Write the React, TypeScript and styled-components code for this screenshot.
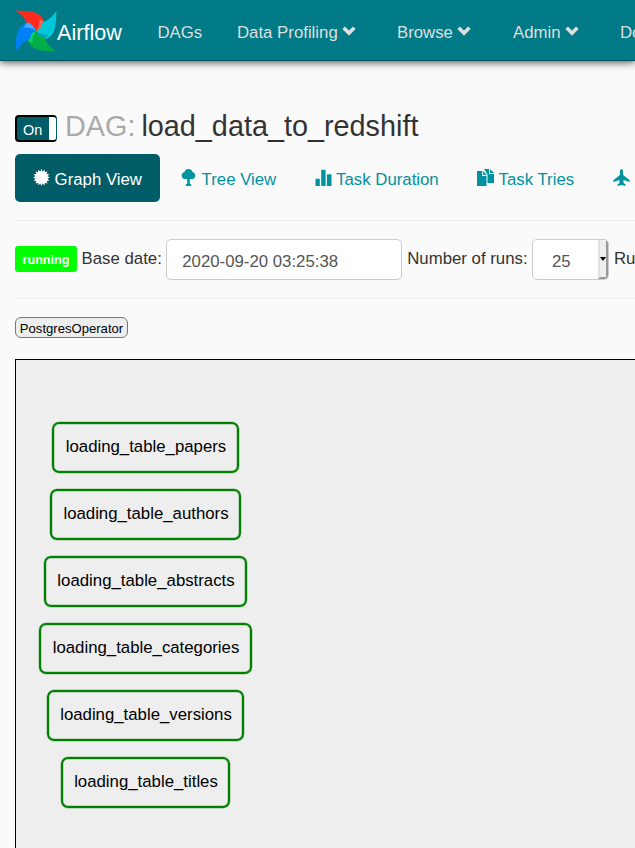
import React from "react";
import styled, { createGlobalStyle } from "styled-components";

const GlobalStyle = createGlobalStyle`
  * { box-sizing: border-box; }
  html, body { margin: 0; height: 848px; overflow: hidden; }
  body {
    background: #fafafa;
    color: #333;
    font: 16.8px/24px "Liberation Sans", Arial, sans-serif;
  }
`;

const Page = styled.div`
  width: 635px;
  height: 848px;
  overflow: hidden;
  white-space: nowrap;
`;

const Navbar = styled.nav`
  display: flex;
  align-items: center;
  height: 61px;
  padding: 5px 0 0 15px;
  background: #007a87;
  border-bottom: 1px solid #004f58;
  box-shadow: 0 1px 8px rgba(0, 0, 0, 0.75);
`;

const Brand = styled.a`
  display: flex;
  flex: none;
  align-items: center;
  width: 142.5px;
  color: #fff;
  font-size: 21.6px;
`;

const Logo = styled.svg`
  flex: none;
  width: 42px;
  height: 42px;
  margin-top: -3px;
`;

const NavItem = styled.a<{ $w: number }>`
  display: flex;
  flex: none;
  align-items: center;
  width: ${(p) => p.$w}px;
  gap: 4.5px;
  color: #dfdfdf;
`;

const Main = styled.main`
  padding: 48px 0 0 15px;
`;

const Heading = styled.h3`
  display: flex;
  align-items: center;
  height: 35px;
  margin: 0;
  font-size: 28.8px;
  font-weight: 400;
  line-height: 32px;
`;

const Toggle = styled.span`
  display: flex;
  flex: none;
  align-items: stretch;
  justify-content: space-between;
  width: 42px;
  height: 27px;
  margin: 4px 8px 0 0;
  padding-left: 6px;
  border: 2px solid #000;
  border-right: 1px solid #005c66;
  border-radius: 4px;
  overflow: hidden;
  background: #005c66;
  color: #fff;
  font-size: 14.4px;
  line-height: 26px;
`;

const Knob = styled.i`
  width: 7px;
  margin: -1px 0;
  border-radius: 3px;
  background: #fff;
`;

const Title = styled.span`
  margin-top: -2px;
`;

const Muted = styled.span`
  margin-right: 6px;
  color: #aaa;
`;

const Tabs = styled.div`
  display: flex;
  height: 77px;
  padding: 10px 0 18px;
  border-bottom: 1px solid #eee;
`;

const Tab = styled.a<{ $w: number; $active?: boolean }>`
  display: flex;
  flex: none;
  align-items: center;
  width: ${(p) => p.$w}px;
  height: 48px;
  margin-right: 2px;
  padding: 3px 0 0 18px;
  gap: 4.6px;
  border-radius: 5px;
  color: ${(p) => (p.$active ? "#fff" : "#0092a0")};
  background: ${(p) => (p.$active ? "#005c66" : "transparent")};
`;

const Icon = styled.svg`
  flex: none;
  width: 17px;
  height: 17px;
  margin-top: -4px;
  fill: currentColor;
`;

const Chevron = styled.svg`
  width: 14px;
  height: 10px;
  margin-top: -3px;
  fill: #dfdfdf;
`;

const Filters = styled.form`
  display: flex;
  align-items: center;
  height: 78px;
  border-bottom: 1px solid #eee;
`;

const Label = styled.label`
  flex: none;
  margin-top: -2px;
`;

const Status = styled.span`
  flex: none;
  width: 62px;
  height: 26px;
  margin: -2px 4.600px 0 0;
  border-radius: 3px;
  background: #0f0;
  color: #fff;
  font-size: 12.6px;
  font-weight: 700;
  line-height: 28px;
  text-align: center;
`;

const Field = styled.span<{ $w: number; $pad: number }>`
  display: flex;
  flex: none;
  justify-content: space-between;
  width: ${(p) => p.$w}px;
  height: 41px;
  margin: 0 5px 0 4.4px;
  padding-left: ${(p) => p.$pad}px;
  border: 1px solid #ccc;
  border-radius: 5px;
  background: #fff;
  color: #555;
  line-height: 43px;
  overflow: hidden;
`;

const Arrow = styled.span`
  display: flex;
  align-items: center;
  justify-content: center;
  width: 10px;
  border-left: 2px solid #e2e2e2;
  border-right: 2px solid #999;
  border-bottom: 2px solid #999;
  background: #eee;

  &::after {
    content: "";
    border: 3px solid transparent;
    border-top: 4px solid #000;
    border-bottom: 0;
  }
`;

const Legend = styled.span`
  display: block;
  width: 113px;
  height: 21px;
  margin: 18px 0 21px;
  border: 1px solid #777;
  border-radius: 6px;
  background: #eee;
  color: #000;
  font-size: 13.1px;
  line-height: 21px;
  text-align: center;
`;

const Canvas = styled.section`
  height: 520px;
  padding: 62px 0 0 23px;
  border: 1px solid #000;
  border-right: 0;
  background: #eee;
`;

const Graph = styled.div`
  display: flex;
  flex-direction: column;
  align-items: center;
  width: 213px;
  gap: 16px;
`;

const Node = styled.div`
  height: 51px;
  padding: 0 10.5px 0 11.500px;
  border: 2px solid #008000;
  border-radius: 7px;
  box-shadow: 0 0 0 0.5px rgba(0, 128, 0, 0.4), inset 0 0 0 0.5px rgba(0, 128, 0, 0.4);
  color: #000;
  line-height: 46px;
`;

const Caret = () => (
  <Chevron viewBox="0 0 14 10">
    <path d="M.4 3.1 2.9.5 7 4.500 11.100.5l2.500 2.600L7 9.700z" />
  </Chevron>
);

const menu: [string, number, boolean][] = [
  ["DAGs", 79.5, false],
  ["Data Profiling", 160, true],
  ["Browse", 116, true],
  ["Admin", 107, true],
  ["Docs", 80, true],
];

const blades = [
  { angle: 0, main: "#ff2a1c", facet: "#ff6a55" },
  { angle: 90, main: "#00c8d8", facet: "#00a4b8" },
  { angle: 180, main: "#00ad46", facet: "#00dc62" },
  { angle: 270, main: "#0080f5", facet: "#4aa8ff" },
];

const burst = Array.from({ length: 32 }, (_, i) => {
  const r = i % 2 ? 6.2 : 8.4;
  const a = (i * Math.PI) / 16;
  return `${8.5 + r * Math.sin(a)},${8.5 - r * Math.cos(a)}`;
}).join(" ");

const tasks = ["papers", "authors", "abstracts", "categories", "versions", "titles"];

export default function App() {
  return (
    <Page>
      <GlobalStyle />
      <Navbar>
        <Brand>
          <Logo viewBox="0 0 42 42">
            {blades.map((b) => (
              <g key={b.angle} transform={`rotate(${b.angle} 21 21)`}>
                <path fill={b.main} d="M.5.5C10 1 18 .8 23 4c4 2.500 6 5.500 6.500 9C28 17 25 19 21 21c-1-4-3-5.500-8-5.500C11 9 6 4 .5.5z" />
                <path fill={b.facet} d="M21 21c3-4 4-7.500 3.500-12 2.500 1 4 2 5 4C28 17 25 19 21 21z" />
              </g>
            ))}
          </Logo>
          Airflow
        </Brand>
        {menu.map(([label, width, caret]) => (
          <NavItem key={label} $w={width}>
            {label}
            {caret && <Caret />}
          </NavItem>
        ))}
      </Navbar>
      <Main>
        <Heading>
          <Toggle>On<Knob /></Toggle>
          <Title>
            <Muted>DAG:</Muted>
            load_data_to_redshift
          </Title>
        </Heading>
        <Tabs>
          <Tab $w={145} $active>
            <Icon viewBox="0 0 17 17"><polygon points={burst} /></Icon>
            Graph View
          </Tab>
          <Tab $w={132.5}>
            <Icon viewBox="0 0 17 17">
              <path d="M8.500 0c2 0 3.700 1.300 4 3 1.600.2 2.800 1.700 2.800 3.400 0 2.200-1.700 3.900-3.700 3.900-.8 0-1.300-.2-1.800-.5v5l1.400.8V17H5.800v-1.400l1.400-.8v-5c-.5.3-1 .5-1.800.5-2 0-3.700-1.700-3.700-3.900C1.700 4.700 2.900 3.200 4.500 3c.3-1.700 2-3 4-3z" />
            </Icon>
            Tree View
          </Tab>
          <Tab $w={160.5}>
            <Icon viewBox="0 0 17 17">
              <path d="M.5 17v-6.500q0-.7.7-.7h2.900q.7 0 .7.7V17zM6.200 17V1.500q0-.7.7-.7h3q.7 0 .7.700V17zM11.900 17V6q0-.7.7-.7h3.200q.7 0 .7.700V17z" />
            </Icon>
            Task Duration
          </Tab>
          <Tab $w={134}>
            <Icon viewBox="0 0 17 17">
              <path d="M0 2h5.200v5h4.300v10H0zM6.200 2l3.500 4H6.200z" />
              <path d="M7 0h5v5h5v9h-6.500V5.500z" />
              <path d="M13 0l4 4h-4z" />
            </Icon>
            Task Tries
          </Tab>
          <Tab $w={60} aria-label="Landing Times">
            <Icon viewBox="0 0 17 17">
              <path d="M8.500 0c1 0 1.600 1.500 1.600 3v3l6.600 5.300V13l-6.200-2v3l2 1.500V17l-4-1-4 1v-1.500l2-1.500v-3L.3 13v-1.700L6.900 6V3C6.900 1.500 7.500 0 8.500 0z" />
            </Icon>
          </Tab>
        </Tabs>
        <Filters>
          <Status>running</Status>
          <Label>Base date:</Label>
          <Field $w={236} $pad={15}>2020-09-20 03:25:38</Field>
          <Label>Number of runs:</Label>
          <Field $w={77} $pad={19}>25<Arrow /></Field>
          <Label>Run:</Label>
        </Filters>
        <Legend>PostgresOperator</Legend>
        <Canvas>
          <Graph>
            {tasks.map((task) => <Node key={task}>loading_table_{task}</Node>)}
          </Graph>
        </Canvas>
      </Main>
    </Page>
  );
}
